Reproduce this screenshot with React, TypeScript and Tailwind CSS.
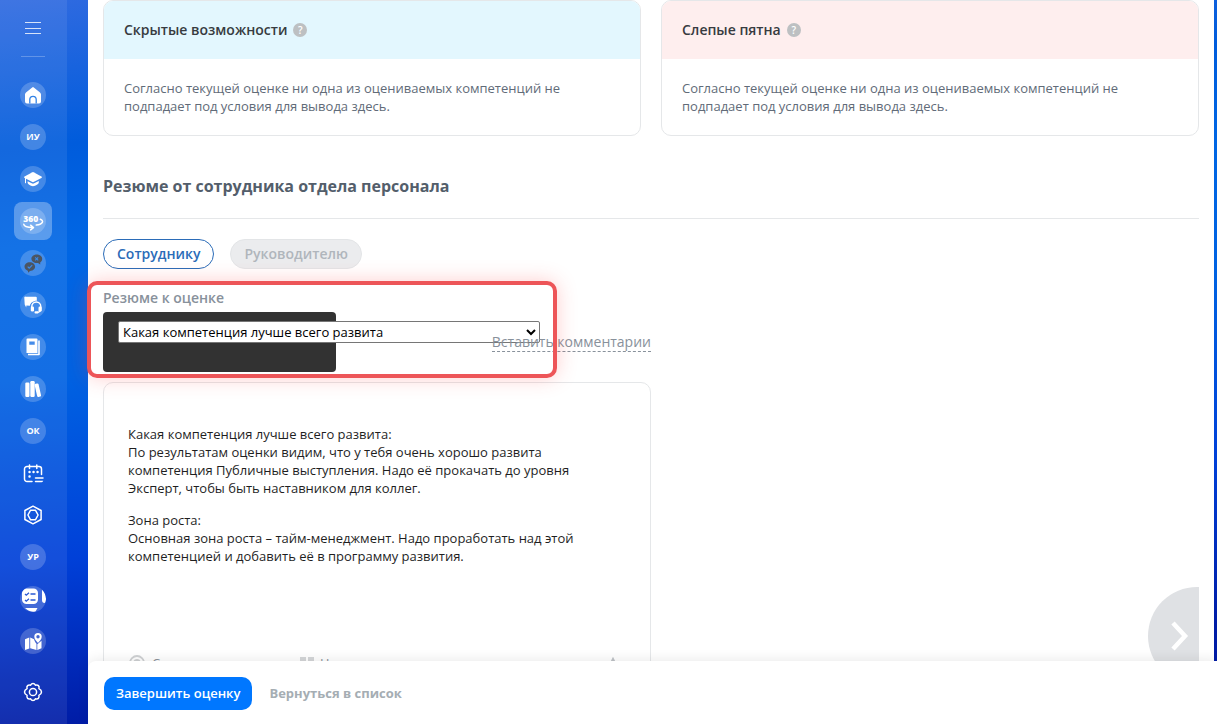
import React from 'react';
import { clsx } from 'clsx';

type NavItem = {
    label: string;
    icon: React.ReactNode;
    plain?: boolean;
    active?: boolean;
};

const NAV_ITEMS: NavItem[] = [
    { label: 'Главная', icon: <HomeIcon /> },
    { label: 'Индивидуальное управление', icon: 'ИУ' },
    { label: 'Обучение', icon: <GraduationIcon /> },
    { label: 'Оценка 360', icon: <Review360Icon />, active: true },
    { label: 'Опросы', icon: <SurveyIcon /> },
    { label: 'Поддержка', icon: <SupportIcon /> },
    { label: 'Справочник', icon: <NotebookIcon /> },
    { label: 'Библиотека', icon: <BooksIcon /> },
    { label: 'Оценка компетенций', icon: 'ОК' },
    { label: 'Календарь', icon: <CalendarIcon />, plain: true },
    { label: 'Компетенции', icon: <HexagonIcon />, plain: true },
    { label: 'Управление развитием', icon: 'УР' },
    { label: 'Задачи', icon: <TasksIcon /> },
    { label: 'Карта', icon: <MapIcon /> },
];

function HomeIcon() {
    return (
        <svg viewBox="0 0 26 26" className="size-full" fill="white">
            <path d="M12.2 5.4a1.3 1.3 0 0 1 1.6 0l6.2 5a2.6 2.6 0 0 1 1 2V19.6a2 2 0 0 1-2 2H7a2 2 0 0 1-2-2v-7.2a2.6 2.6 0 0 1 1-2z" />
            <path d="M9.800 21.600v-4a3.200 3.200 0 0 1 6.400 0v4" fill="none" stroke="#3383e6" strokeWidth="1.300" />
        </svg>
    );
}

function GraduationIcon() {
    return (
        <svg viewBox="0 0 26 26" className="size-full" fill="white">
            <path d="M12.400 6.200a1.500 1.500 0 0 1 1.200 0l7.800 4.300c.7.400.7 1 0 1.400l-7.800 4.200a1.500 1.500 0 0 1-1.200 0l-7.800-4.200c-.7-.4-.7-1 0-1.400z" />
            <path d="M7.600 15.200l4.700 2.400c.5.200.9.200 1.400 0l5.100-2.600v1.600c0 1.400-3 3.600-5.800 3.600s-5.400-2.200-5.400-3.600z" />
            <path d="M5.500 12.500v4.300" stroke="white" strokeWidth="1" strokeLinecap="round" />
        </svg>
    );
}

function Review360Icon() {
    return (
        <svg viewBox="0 0 26 26" className="size-full overflow-visible">
            <text x="3.200" y="14" fontSize="8.500" fontWeight="800" fill="white">360</text>
            <path d="M20.300 11.200c3.800 1.500 3 4.800-4 5.900M3.800 16.300c.3 2 2.800 3 8.800 3.300M10.600 17.200l2.900 2.400-2.900 2.300" fill="none" stroke="white" strokeWidth="1.500" strokeLinecap="round" strokeLinejoin="round" />
        </svg>
    );
}

function SurveyIcon() {
    return (
        <svg viewBox="0 0 26 26" className="size-full">
            <g fill="#4b5563">
                <path d="M16.800 4.500c3 0 5.400 1.900 5.400 4.300 0 1.700-.8 2.900-2 3.600v2.200l-2.200-1.500h-1.200c-3 0-5.400-1.900-5.400-4.300s2.400-4.300 5.400-4.300z" />
                <path d="M9.800 12.200c3 0 5.300 2 5.300 4.400S13 21 10 21l-2 1.700V20.900c-2-.7-3.500-2.300-3.500-4.300 0-2.400 2.300-4.400 5.300-4.400z" />
            </g>
            <path d="M15.200 7.300l3 3m0-3l-3 3M7.700 16.700l1.500 1.500 3-3" fill="none" stroke="#398ae9" strokeWidth="1.200" />
        </svg>
    );
}

function SupportIcon() {
    return (
        <svg viewBox="0 0 26 26" className="size-full">
            <path d="M5.800 4.700h10a1 1 0 0 1 1 1v3c-4 0-6.600 2.500-6.900 5l-3.500-.3-.2 2-1.500-2.800L4.300 5.800a1 1 0 0 1 1.500-1.100z" fill="white" />
            <path d="M11.800 16.200v-1.700a4.500 4.500 0 0 1 9 0v2.500c0 1.800-1 3-3.500 3.500" fill="none" stroke="white" strokeWidth="1.400" />
            <rect x="10.800" y="14.500" width="3.200" height="5" rx="1.300" fill="white" />
            <rect x="18.500" y="14.500" width="3.200" height="5" rx="1.300" fill="white" />
            <rect x="14.500" y="19.200" width="4" height="2.300" rx="1" fill="white" />
        </svg>
    );
}

function NotebookIcon() {
    return (
        <svg viewBox="0 0 26 26" className="size-full">
            <path fillRule="evenodd" d="M7.500 4.500h9a1 1 0 0 1 1 1V19h-11V5.500a1 1 0 0 1 1-1zM9.300 7.500v3.300h5.400V7.500z" fill="white" />
            <path d="M19 6.500v14H8" fill="none" stroke="white" strokeWidth="1.600" strokeLinejoin="round" />
        </svg>
    );
}

function BooksIcon() {
    return (
        <svg viewBox="0 0 26 26" className="size-full" fill="white">
            <rect x="5.300" y="6.500" width="4.200" height="14.500" rx="1.200" />
            <rect x="10.300" y="5" width="4.400" height="16" rx="1.200" />
            <rect x="15.800" y="7.500" width="4" height="13.500" rx="1.200" transform="rotate(-13 17.600 14)" />
        </svg>
    );
}

function CalendarIcon() {
    return (
        <svg viewBox="0 0 26 26" className="size-full" fill="none" stroke="white" strokeWidth="1.500" strokeLinecap="round">
            <path d="M12 21.500H7A2.500 2.500 0 0 1 4.500 19V9A2.500 2.500 0 0 1 7 6.500h12A2.500 2.500 0 0 1 21.500 9v5.500M9.500 5v3.500M16.800 5v3.500" />
            <path d="M15.500 18h7.500M15.500 21.500h7.500" />
            <path d="M9.500 12h.1M13.500 12h.1M17.500 12h.1M9.500 16.500h.1" strokeWidth="2.400" />
        </svg>
    );
}

function HexagonIcon() {
    return (
        <svg viewBox="0 0 26 26" className="size-full" fill="none" stroke="white" strokeWidth="1.500" strokeLinejoin="round">
            <path d="M13 4.200l8.100 4.300v9L13 21.800l-8.100-4.300v-9z" />
            <path d="M10.600 8.200h4.800l2.700 4.800-2.700 4.800h-4.800L7.900 13z" />
        </svg>
    );
}

function TasksIcon() {
    return (
        <svg viewBox="0 0 26 26" className="size-full" fill="white">
            <rect x="2" y="2.500" width="16" height="15.500" rx="4.500" />
            <path d="M22 3.500c3 3 4.200 7 4 10-.1 2-.8 3.500-1.500 3.500-1.600 0-2.500-1.300-2.500-3z" />
            <path d="M5 22h12.500l-2 3.500c-4 .7-7.500-.5-10.500-3.500z" />
            <path d="M5 8l1.300 1.200L9 6.700M5 14l1.300 1.200L9 12.700M10.500 8h5M10.500 14h5" fill="none" stroke="#2a59d3" strokeWidth="1.300" />
        </svg>
    );
}

function MapIcon() {
    return (
        <svg viewBox="0 0 26 26" className="size-full" fill="white">
            <path d="M5 11.200l4.300-1.600v10.800L5 22z" />
            <path d="M10.200 9.600l3.900 1.600c.3 1.600 1.200 3.200 2.400 4.600V22l-6.300-1.800z" />
            <path d="M17.300 16.200l4.200-3.500v7.500L17.300 22z" />
            <path fillRule="evenodd" d="M18 5a3.700 3.700 0 0 1 3.700 3.700c0 2.400-2 4.400-3.700 6.200-1.700-1.800-3.700-3.800-3.700-6.200A3.700 3.700 0 0 1 18 5zm0 2a1.700 1.700 0 1 0 0 3.400A1.700 1.700 0 0 0 18 7z" />
        </svg>
    );
}

function GearIcon() {
    return (
        <svg viewBox="0 0 26 26" className="size-[26px]" fill="none" stroke="white" strokeWidth="1.500" strokeLinejoin="round">
            <path d="M10.600 6.200C11.200 5 11.500 4.500 13 4.500s1.800.5 2.400 1.700c1.300-.4 1.900-.6 3 .4s.9 1.700.5 3c1.200.6 2.600 1.900 2.600 3.400s-1.400 2.800-2.600 3.400c.4 1.300.6 2-.5 3s-1.700.8-3 .4c-.6 1.200-.9 1.700-2.400 1.700s-1.800-.5-2.400-1.700c-1.300.4-1.900.6-3-.4s-.9-1.700-.5-3C5.900 15.800 4.500 14.500 4.500 13s1.400-2.800 2.600-3.400c-.4-1.300-.6-2 .5-3s1.700-.8 3-.4z" />
            <circle cx="13" cy="13" r="3.600" />
        </svg>
    );
}

function Sidebar() {
    return (
        <nav className="w-[67px] shrink-0 bg-white/8 pr-px flex flex-col items-center">
            <button aria-label="Меню" className="mt-[22px] h-3 w-4 flex flex-col justify-between">
                <span className="h-px w-full bg-white/80" />
                <span className="h-px w-full bg-white/80" />
                <span className="h-px w-full bg-white/80" />
            </button>
            <div className="mt-[22px] h-px w-6 bg-white/25" />
            <div className="mt-[19px] flex flex-col gap-1">
                {NAV_ITEMS.map(item => (
                    <a
                        key={item.label}
                        href="#"
                        aria-label={item.label}
                        className={clsx('size-[38px] flex items-center justify-center rounded-lg', item.active && 'bg-white/30')}
                    >
                        <span
                            className={clsx(
                                'size-[26px] rounded-full overflow-hidden flex items-center justify-center text-[9px] font-bold text-white',
                                !item.plain && 'bg-white/20'
                            )}
                        >
                            {item.icon}
                        </span>
                    </a>
                ))}
            </div>
            <a href="#" aria-label="Настройки" className="mt-[19px]">
                <GearIcon />
            </a>
        </nav>
    );
}

function InsightCard({ title, headerClass }: { title: string; headerClass: string }) {
    return (
        <section className="rounded-[10px] border border-[#e5e7e9] overflow-hidden">
            <div className={clsx('h-[58px] px-5 flex items-center gap-[6px]', headerClass)}>
                <h3 className="text-sm font-semibold text-[#373b40]">{title}</h3>
                <span className="size-[14px] rounded-full bg-[#bdc0c2] text-white text-[10px] leading-[14px] font-semibold text-center">?</span>
            </div>
            <p className="p-5 text-[13px] leading-[18px] text-[#616b78]">
                Согласно текущей оценке ни одна из оцениваемых компетенций не подпадает под условия для вывода здесь.
            </p>
        </section>
    );
}

function SummaryEditor() {
    return (
        <div className="mt-[10px] rounded-[10px] border border-[#e5e7e9] px-6 pt-[42px] text-[#1f1f1f]">
            <div
                role="textbox"
                aria-multiline="true"
                aria-label="Текст резюме"
                contentEditable
                suppressContentEditableWarning
                className="h-[228px] pr-4 text-[13px] leading-[18px] space-y-[14px] outline-none"
            >
                <p>
                    Какая компетенция лучше всего развита:<br />
                    По результатам оценки видим, что у тебя очень хорошо развита компетенция Публичные выступления. Надо её прокачать до уровня Эксперт, чтобы быть наставником для коллег.
                </p>
                <p>
                    Зона роста:<br />
                    Основная зона роста – тайм-менеджмент. Надо проработать над этой компетенцией и добавить её в программу развития.
                </p>
            </div>
            <div className="flex items-center pb-6 text-[13px] leading-[20px] text-[#8b929a]">
                <button className="w-[172px] flex items-center gap-[6px]">
                    <svg viewBox="0 0 18 18" className="size-[18px]" fill="none" stroke="#cfd1d3" strokeWidth="1.800">
                        <circle cx="9" cy="9" r="7" />
                        <circle cx="9" cy="9" r="3" />
                    </svg>
                    Сотрудник
                </button>
                <button className="flex items-center gap-[6px]">
                    <svg viewBox="0 0 14 14" className="size-[14px]" fill="#d5d7d9">
                        <path d="M0 1h6v6l-3 5H1l1-5H0zM8 1h6v6l-3 5H9l1-5H8z" />
                    </svg>
                    Цитата
                </button>
                <button aria-label="Формат текста" className="ml-auto mr-1">
                    <svg viewBox="0 0 18 18" className="size-[18px]" fill="none" stroke="#bfc3c7" strokeWidth="2">
                        <path d="M3 17L9 5l6 12M5 13h8" />
                    </svg>
                </button>
            </div>
        </div>
    );
}

function SummarySection() {
    return (
        <div className="relative mt-[19px] w-1/2">
            <label htmlFor="summary" className="block text-sm font-semibold text-[#88919b]">Резюме к оценке</label>
            <div className="mt-1 flex justify-between items-start">
                <div className="w-[233px] h-[60px] shrink-0 rounded bg-[#323232] pl-[15px] pt-[7px]">
                    <select id="summary" className="w-[422px] h-[22px] rounded-xs border border-[#767676] bg-white text-[13px] text-black">
                        <option>Какая компетенция лучше всего развита</option>
                        <option>Зона роста</option>
                    </select>
                </div>
                <a href="#" className="relative -ml-40 mt-5 whitespace-nowrap border-b border-dashed border-[#88919b] text-sm leading-[19px] text-[#88919b]">
                    Вставить комментарии
                </a>
            </div>
            <SummaryEditor />
            <div className="pointer-events-none absolute -left-4 -top-[7px] h-[97px] w-[470px] rounded-[10px] border-4 border-[#ed5558] shadow-[0_0_20px_rgba(255,60,60,0.25)]" />
        </div>
    );
}

export default function App() {
    return (
        <div
            className="h-screen flex overflow-hidden bg-[linear-gradient(175deg,#2f6ae0_0%,#005cdc_18%,#0066e4_30%,#0062e2_46%,#0040d8_68%,#001ca6_88%)]"
            style={{ fontFamily: '"Open Sans", "Noto Sans", sans-serif' }}
        >
            <Sidebar />
            <div className="min-w-0 flex-1 flex flex-col">
                <main className="relative pl-[21px] pr-[3px] min-h-0 flex-1 overflow-hidden">
                    <div className="bg-white px-[15px] pb-5">
                        <div className="grid grid-cols-2 gap-5">
                            <InsightCard title="Скрытые возможности" headerClass="bg-[#e3f7fe]" />
                            <InsightCard title="Слепые пятна" headerClass="bg-[#feeeee]" />
                        </div>
                        <h2 className="mt-[38px] pb-5 border-b border-[#e5e7e9] text-base font-bold text-[#535e6b]">
                            Резюме от сотрудника отдела персонала
                        </h2>
                        <div className="mt-5 flex gap-4 text-sm font-semibold">
                            <button className="h-[30px] px-[13px] rounded-full border border-[#2b6cb8] text-[#2b6cb8]">Сотруднику</button>
                            <button disabled className="h-[30px] px-[13px] rounded-full border border-[#e3e5e7] bg-[#ebecee] text-[#b0b6bc]">Руководителю</button>
                        </div>
                        <SummarySection />
                    </div>
                    <button aria-label="Далее" className="absolute right-[18px] -bottom-6 h-[98px] w-[51px] rounded-l-full bg-[#dfe1e4] flex items-center justify-end pr-[10px]">
                        <svg viewBox="0 0 20 30" className="h-[30px] w-5" fill="none" stroke="white" strokeWidth="4.500">
                            <path d="M4 2l12 13L4 28" />
                        </svg>
                    </button>
                </main>
                <div className="relative ml-[21px] bg-white">
                    <footer className="flex items-center gap-[17px] bg-white px-4 pt-4 pb-[14px] rounded-tl-lg shadow-[0_-2px_12px_rgba(0,0,0,0.08)] text-[13px] font-bold">
                        <button className="h-[33px] px-3 rounded-[10px] bg-[#0077ff] font-semibold text-white">Завершить оценку</button>
                        <a href="#" className="text-[#a5adb3]">Вернуться в список</a>
                    </footer>
                </div>
            </div>
        </div>
    );
}
